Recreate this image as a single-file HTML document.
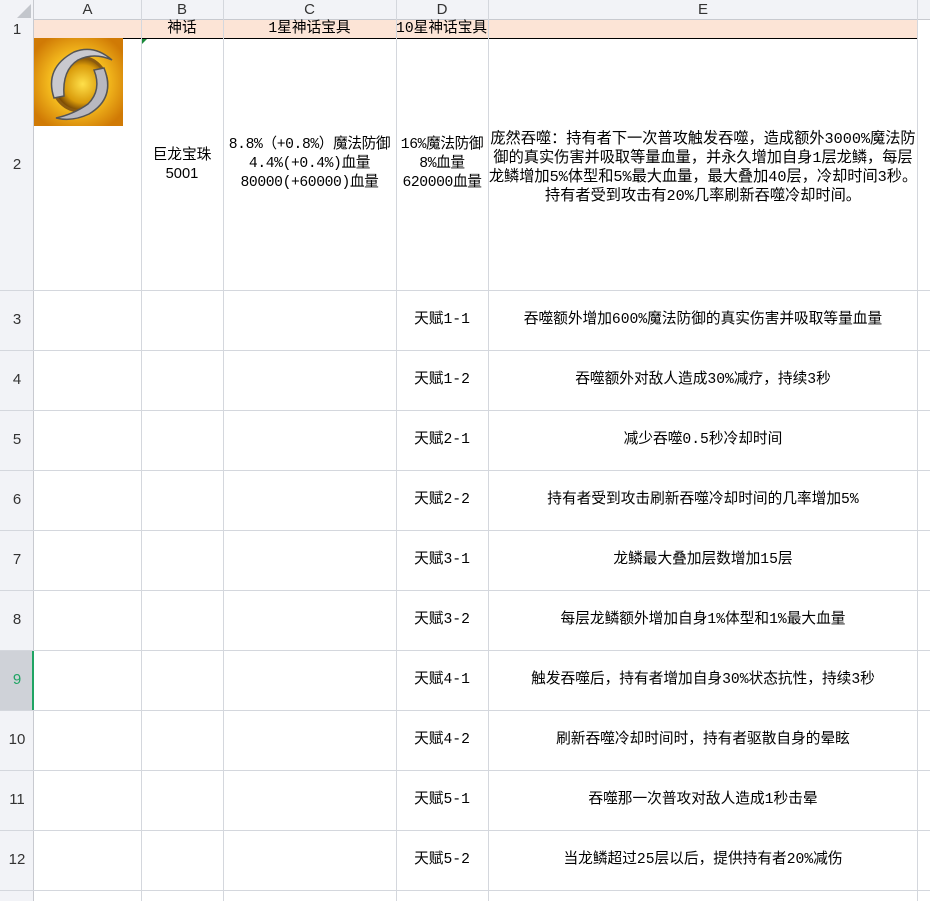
<!DOCTYPE html>
<html><head><meta charset="utf-8"><style>
body{margin:0;width:930px;height:901px;background:#fff;position:relative;overflow:hidden;font-family:"Liberation Sans","Noto Sans CJK SC",sans-serif;font-size:14px;color:#000}
.a{position:absolute;box-sizing:border-box}
.hl{position:absolute;height:1px;background:#d4d7dd}
.vl{position:absolute;width:1px;background:#d4d7dd}
.ch{position:absolute;top:0;height:20px;line-height:20px;text-align:center;font-size:15px;color:#333}
.rh{position:absolute;left:0;width:34px;text-align:center;font-size:15px;color:#333}
.c{position:absolute;display:flex;align-items:center;justify-content:center;text-align:center;line-height:19px;font-family:"Liberation Mono","Noto Sans CJK SC",sans-serif;font-size:14.7px;white-space:nowrap}
</style></head><body>
<div class="a" style="left:0;top:0;width:930px;height:20px;background:#f2f3f7;border-bottom:1px solid #c8cad0"></div>
<div class="a" style="left:0;top:0;width:34px;height:901px;background:#f2f3f7;border-right:1px solid #c8cad0"></div>
<div class="a" style="left:0;top:650px;width:34px;height:60px;background:#cfd2d8;border-right:2px solid #1fa463"></div>
<svg class="a" style="left:17px;top:4px" width="14" height="14"><polygon points="14,0 14,14 0,14" fill="#c3c6cc"/></svg>
<div class="ch" style="left:34px;width:107px">A</div>
<div class="ch" style="left:141px;width:82px">B</div>
<div class="ch" style="left:223px;width:173px">C</div>
<div class="ch" style="left:396px;width:92px">D</div>
<div class="ch" style="left:488px;width:430px">E</div>
<div class="a" style="left:34px;top:20px;width:884px;height:19px;background:#fce4d6;border-bottom:1.5px solid #000;border-right:1px solid #000"></div>
<div class="vl" style="left:141px;top:0;height:901px"></div>
<div class="vl" style="left:223px;top:0;height:901px"></div>
<div class="vl" style="left:396px;top:0;height:901px"></div>
<div class="vl" style="left:488px;top:0;height:901px"></div>
<div class="vl" style="left:917px;top:0;height:901px"></div>
<div class="hl" style="left:0;top:290px;width:930px"></div>
<div class="hl" style="left:0;top:350px;width:930px"></div>
<div class="hl" style="left:0;top:410px;width:930px"></div>
<div class="hl" style="left:0;top:470px;width:930px"></div>
<div class="hl" style="left:0;top:530px;width:930px"></div>
<div class="hl" style="left:0;top:590px;width:930px"></div>
<div class="hl" style="left:0;top:650px;width:930px"></div>
<div class="hl" style="left:0;top:710px;width:930px"></div>
<div class="hl" style="left:0;top:770px;width:930px"></div>
<div class="hl" style="left:0;top:830px;width:930px"></div>
<div class="hl" style="left:0;top:890px;width:930px"></div>
<div class="rh" style="top:20px;height:19px;line-height:19px">1</div>
<div class="rh" style="top:39px;height:251px;line-height:251px">2</div>
<div class="rh" style="top:290px;height:60px;line-height:60px">3</div>
<div class="rh" style="top:350px;height:60px;line-height:60px">4</div>
<div class="rh" style="top:410px;height:60px;line-height:60px">5</div>
<div class="rh" style="top:470px;height:60px;line-height:60px">6</div>
<div class="rh" style="top:530px;height:60px;line-height:60px">7</div>
<div class="rh" style="top:590px;height:60px;line-height:60px">8</div>
<div class="rh" style="top:650px;height:60px;line-height:60px;color:#1fa463">9</div>
<div class="rh" style="top:710px;height:60px;line-height:60px">10</div>
<div class="rh" style="top:770px;height:60px;line-height:60px">11</div>
<div class="rh" style="top:830px;height:60px;line-height:60px">12</div>
<div class="c" style="left:141px;top:20px;width:82px;height:19px">神话</div>
<div class="c" style="left:223px;top:20px;width:173px;height:19px">1星神话宝具</div>
<div class="c" style="left:396px;top:20px;width:100px;height:19px;justify-content:flex-start">10星神话宝具</div>
<svg class="a" style="left:142px;top:39px" width="5" height="5"><polygon points="0,0 5,0 0,5" fill="#1a8a3a"/></svg>
<svg class="a" style="left:34px;top:38px" width="89" height="88" viewBox="0 0 89 88">
<defs><radialGradient id="g" cx="50%" cy="50%" r="60%"><stop offset="0" stop-color="#fff27a"/><stop offset=".5" stop-color="#f7c020"/><stop offset="1" stop-color="#d07a05"/></radialGradient>
<radialGradient id="o" cx="55%" cy="50%" r="50%"><stop offset="0" stop-color="#ffe04a"/><stop offset=".7" stop-color="#d99a0a"/><stop offset="1" stop-color="#7a4a05"/></radialGradient></defs>
<rect width="89" height="88" fill="url(#g)"/>
<circle cx="46" cy="46" r="27" fill="url(#o)" stroke="#8a5a10" stroke-width="3"/>
<path d="M20 60 Q10 30 40 14 Q60 6 78 22 Q60 14 44 22 Q28 32 30 58 Z" fill="#c9c9cf" stroke="#555" stroke-width="1.5"/>
<path d="M70 30 Q82 60 55 76 Q38 84 22 80 Q40 76 54 66 Q68 52 60 32 Z" fill="#b8b8c0" stroke="#555" stroke-width="1.5"/>
</svg>
<div class="c" style="left:141px;top:39px;width:82px;height:251px;font-family:'Liberation Sans','Noto Sans CJK SC',sans-serif">巨龙宝珠<br>5001</div>
<div class="c" style="left:223px;top:39px;width:173px;height:251px;letter-spacing:-0.4px">8.8%（+0.8%）魔法防御<br>4.4%(+0.4%)血量<br>80000(+60000)血量</div>
<div class="c" style="left:396px;top:39px;width:92px;height:251px;letter-spacing:-0.4px">16%魔法防御<br>8%血量<br>620000血量</div>
<div class="c" style="left:489px;top:42px;width:428px;height:251px;font-size:15.2px">庞然吞噬：持有者下一次普攻触发吞噬，造成额外3000%魔法防<br>御的真实伤害并吸取等量血量，并永久增加自身1层龙鳞，每层<br>龙鳞增加5%体型和5%最大血量，最大叠加40层，冷却时间3秒。<br>持有者受到攻击有20%几率刷新吞噬冷却时间。</div>
<div class="c" style="left:396px;top:290px;width:92px;height:60px">天赋1-1</div>
<div class="c" style="left:488px;top:290px;width:430px;height:60px">吞噬额外增加600%魔法防御的真实伤害并吸取等量血量</div>
<div class="c" style="left:396px;top:350px;width:92px;height:60px">天赋1-2</div>
<div class="c" style="left:488px;top:350px;width:430px;height:60px">吞噬额外对敌人造成30%减疗，持续3秒</div>
<div class="c" style="left:396px;top:410px;width:92px;height:60px">天赋2-1</div>
<div class="c" style="left:488px;top:410px;width:430px;height:60px">减少吞噬0.5秒冷却时间</div>
<div class="c" style="left:396px;top:470px;width:92px;height:60px">天赋2-2</div>
<div class="c" style="left:488px;top:470px;width:430px;height:60px">持有者受到攻击刷新吞噬冷却时间的几率增加5%</div>
<div class="c" style="left:396px;top:530px;width:92px;height:60px">天赋3-1</div>
<div class="c" style="left:488px;top:530px;width:430px;height:60px">龙鳞最大叠加层数增加15层</div>
<div class="c" style="left:396px;top:590px;width:92px;height:60px">天赋3-2</div>
<div class="c" style="left:488px;top:590px;width:430px;height:60px">每层龙鳞额外增加自身1%体型和1%最大血量</div>
<div class="c" style="left:396px;top:650px;width:92px;height:60px">天赋4-1</div>
<div class="c" style="left:488px;top:650px;width:430px;height:60px">触发吞噬后，持有者增加自身30%状态抗性，持续3秒</div>
<div class="c" style="left:396px;top:710px;width:92px;height:60px">天赋4-2</div>
<div class="c" style="left:488px;top:710px;width:430px;height:60px">刷新吞噬冷却时间时，持有者驱散自身的晕眩</div>
<div class="c" style="left:396px;top:770px;width:92px;height:60px">天赋5-1</div>
<div class="c" style="left:488px;top:770px;width:430px;height:60px">吞噬那一次普攻对敌人造成1秒击晕</div>
<div class="c" style="left:396px;top:830px;width:92px;height:60px">天赋5-2</div>
<div class="c" style="left:488px;top:830px;width:430px;height:60px">当龙鳞超过25层以后，提供持有者20%减伤</div>
</body></html>
